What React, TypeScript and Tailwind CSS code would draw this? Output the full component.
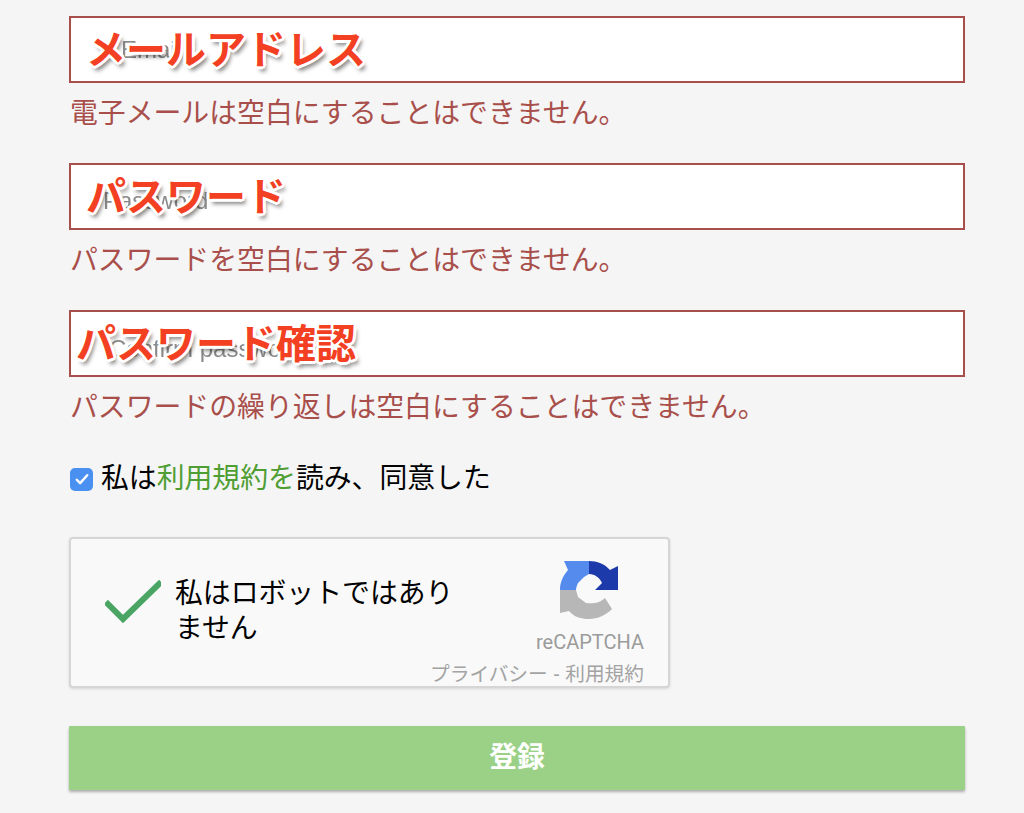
export default function App() {
  const overlay =
    "absolute font-bold text-[40px] leading-[48px] text-[#f44022] whitespace-nowrap [text-shadow:3px_0_0_#fff,-3px_0_0_#fff,0_3px_0_#fff,0_-3px_0_#fff,2px_2px_0_#fff,-2px_-2px_0_#fff,2px_-2px_0_#fff,-2px_2px_0_#fff,3px_5px_4px_rgba(0,0,0,0.5)]";
  const fields = [
    { ph: "Email", phPos: "left-[50px] top-[19px]", label: "メールアドレス", left: "left-[15px]", err: "電子メールは空白にすることはできません。" },
    { ph: "Password", phPos: "left-[32px] top-[23px]", label: "パスワード", left: "left-[15px]", err: "パスワードを空白にすることはできません。" },
    { ph: "Confirm password", phPos: "left-[38px] top-[24px]", label: "パスワード確認", left: "left-[5px]", err: "パスワードの繰り返しは空白にすることはできません。" },
  ];
  return (
    <div className="h-[813px] overflow-hidden bg-[#f5f5f5] pl-[69px] pt-4 font-['Liberation_Sans','Noto_Sans_CJK_JP',sans-serif]">
      <div className="flex w-[896px] flex-col">
        <div className="flex flex-col gap-[29px]">
          {fields.map((f) => (
            <div key={f.ph}>
              <div className="relative h-[67px] border-2 border-[#a94f4b] bg-white">
                <span className={`absolute text-[24px] leading-[26px] text-[#8a8a8a] blur-[0.5px] ${f.phPos}`}>{f.ph}</span>
                <span className={`${overlay} ${f.left} top-[8px]`}>{f.label}</span>
              </div>
              <p className="mt-[11px] pl-[1px] text-[27.85px] leading-[40px] text-[#a94f4b]">{f.err}</p>
            </div>
          ))}
        </div>
        <label className="mt-[36px] flex h-[30px] items-center pl-[1px] text-[27.85px] text-black">
          <span className="mr-[8px] flex h-[23px] w-[23px] items-center justify-center rounded-[5px] bg-[#4a90f0]">
            <svg viewBox="0 0 24 24" className="h-[18px] w-[18px]" fill="none" stroke="#fff" strokeWidth="3.2" strokeLinecap="round" strokeLinejoin="round">
              <path d="M5 13l4.5 4.5L19 7" />
            </svg>
          </span>
          私は<span className="text-[#4f9e33]">利用規約を</span>読み、同意した
        </label>
        <div className="mt-[43px] flex h-[151px] w-[601px] flex-col rounded-[4px] border-2 border-[#d6d6d6] bg-[#f9f9f9] shadow-[0_1px_3px_rgba(0,0,0,0.12)]">
          <div className="flex pr-[24px]">
            <svg viewBox="0 0 56 44" className="ml-[34px] mt-[41px] h-[44px] w-[56px] shrink-0" fill="none" stroke="#4aa564" strokeWidth="6" strokeLinecap="square">
              <path d="M3 24L18 39L54 4" />
            </svg>
            <p className="ml-[14px] mt-[37px] w-[290px] shrink-0 text-[27.85px] leading-[35px] text-black">私はロボットではありません</p>
            <div className="ml-auto flex flex-col items-end pt-[22px]">
              <svg viewBox="0 0 60 60" className="mr-[24px] h-[60px] w-[60px]">
                <path fill="#b7b7b7" d="M0 29H16L18 36L26 42C32 43 40 42 45 37L52 48C46 54 38 58 29 58C21 58 14 56 9 50L0 52Z" />
                <path fill="#548bec" d="M0 29C0 21 3 15 8 9L4 0H22L29 0V13L24 16L18 22C17 24 16 27 16 29Z" />
                <path fill="#1c3aa9" d="M29 0C37 0 45 3 50 9L58 5V29H35L42 22C40 17 35 13 29 13Z" />
              </svg>
              <span className="mt-[9px] whitespace-nowrap font-['Roboto',sans-serif] text-[20px] leading-[24px] text-[#9b9b9b]">reCAPTCHA</span>
            </div>
          </div>
          <div className="mt-[10px] flex justify-end pr-[24px]">
            <span className="whitespace-nowrap text-[19.7px] leading-[20px] text-[#a3a3a3]">プライバシー - 利用規約</span>
          </div>
        </div>
        <button className="mt-[38px] flex h-[64px] w-[896px] items-center justify-center rounded-[1px] bg-[#9ad187] text-[27.85px] font-bold text-white shadow-[0_2px_3px_rgba(0,0,0,0.3)]">
          登録
        </button>
      </div>
    </div>
  );
}
